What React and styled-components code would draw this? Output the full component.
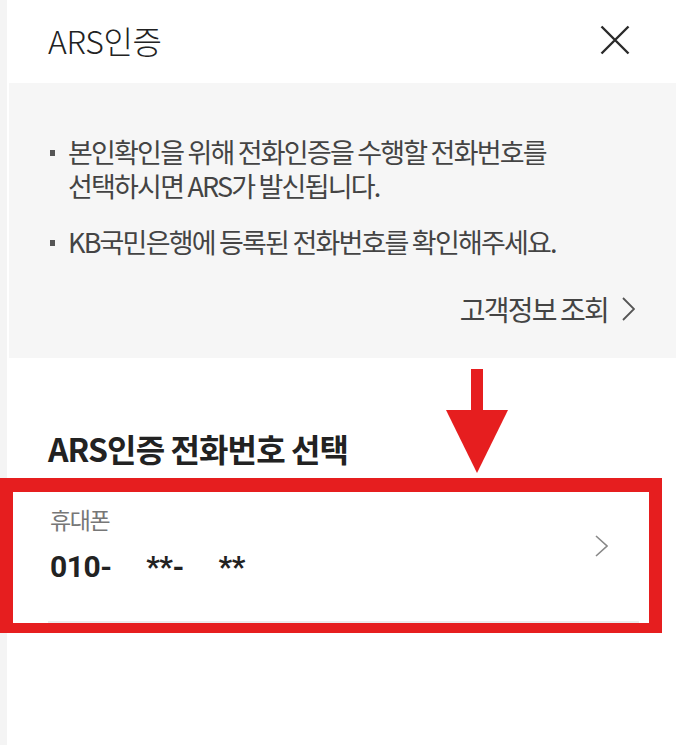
import React from "react";
import styled, { createGlobalStyle } from "styled-components";

const GlobalStyle = createGlobalStyle`
  html, body {
    margin: 0;
    padding: 0;
    background: #fff;
  }
  body {
    font-family: "Noto Sans CJK KR", "Noto Sans", sans-serif;
    color: #222;
  }
`;

const Page = styled.div`
  width: 676px;
  min-height: 745px;
  background: linear-gradient(to right, #f4f4f4 7px, #fff 7px);
`;

const Header = styled.header`
  height: 83px;
  display: flex;
  align-items: center;
  justify-content: space-between;
  padding: 0 46px 0 48px;
`;

const Title = styled.h1`
  margin: 0;
  margin-top: -4px;
  font-size: 32px;
  font-weight: 300;
  letter-spacing: -0.3px;
  color: #222;
`;

const CloseButton = styled.button`
  border: 0;
  padding: 0;
  margin-top: -4px;
  background: none;
  width: 30px;
  height: 30px;
  display: flex;
`;

const Notice = styled.section`
  margin-left: 9px;
  height: 275px;
  box-sizing: border-box;
  background: #f6f6f6;
  padding: 52px 41px 0 41px;
`;

const List = styled.ul`
  margin: 0;
  padding: 0;
  list-style: none;
`;

const Item = styled.li`
  display: flex;
  font-size: 27px;
  line-height: 34px;
  letter-spacing: -1.8px;
  color: #444;
  margin-bottom: ${(p) => p.gap || 0}px;
`;

const Lines = styled.span`
  display: flex;
  flex-direction: column;
`;

const Marker = styled.span`
  flex: 0 0 18px;
  &::before {
    content: "";
    display: block;
    width: 5px;
    height: 6px;
    margin-top: 15px;
    background: #555;
  }
`;

const LinkRow = styled.div`
  margin-top: 33px;
  display: flex;
  justify-content: flex-end;
  align-items: center;
  gap: 14px;
  font-size: 28px;
  line-height: 34px;
  letter-spacing: -1.8px;
  color: #444;
`;

const Select = styled.section`
  position: relative;
  padding: 70px 0 10px 48px;
`;

const Heading = styled.h2`
  margin: 0;
  font-size: 32px;
  line-height: 40px;
  font-weight: 700;
  letter-spacing: -0.9px;
  color: #222;
`;

const ArrowMark = styled.svg`
  position: absolute;
  left: 446px;
  top: 11px;
`;

const Highlight = styled.div`
  margin-right: 14px;
  border: 13px solid #e61e1f;
  border-top-width: 14px;
  border-bottom-width: 10px;
`;

const PhoneRow = styled.div`
  margin: 0 10px 0 35px;
  padding: 13px 31px 35px 2px;
  display: flex;
  align-items: center;
  justify-content: space-between;
  border-bottom: 2px solid #ececec;
`;

const Label = styled.div`
  font-size: 23px;
  line-height: 28px;
  letter-spacing: -1.4px;
  color: #777;
`;

const Number = styled.div`
  margin-top: 15px;
  font-family: "Roboto", "Noto Sans CJK KR", sans-serif;
  font-size: 30px;
  line-height: 38px;
  font-weight: 700;
  letter-spacing: -0.5px;
  color: #222;
  white-space: pre;
`;

const Chevron = ({ w = 13, h = 22, color = "#888", sw = 1.6 }) => (
  <svg width={w} height={h} viewBox={`0 0 ${w} ${h}`}>
    <polyline
      points={`1,1 ${w - 1},${h / 2} 1,${h - 1}`}
      fill="none"
      stroke={color}
      strokeWidth={sw}
    />
  </svg>
);

export default function App() {
  return (
    <Page>
      <GlobalStyle />
      <Header>
        <Title>ARS인증</Title>
        <CloseButton aria-label="닫기">
          <svg width="30" height="30" viewBox="0 0 30 30">
            <path d="M1.5 1.5 L28.5 28.5 M28.5 1.5 L1.5 28.5" stroke="#2a2a2a" strokeWidth="2.4" />
          </svg>
        </CloseButton>
      </Header>

      <Notice>
        <List>
          <Item gap={22}>
            <Marker />
            <Lines>
              <span>본인확인을 위해 전화인증을 수행할 전화번호를</span>
              <span>선택하시면 ARS가 발신됩니다.</span>
            </Lines>
          </Item>
          <Item>
            <Marker />
            <span>KB국민은행에 등록된 전화번호를 확인해주세요.</span>
          </Item>
        </List>
        <LinkRow>
          고객정보 조회
          <Chevron w={13} h={24} color="#555" sw={1.8} />
        </LinkRow>
      </Notice>

      <Select>
        <ArrowMark width="62" height="104" viewBox="0 0 62 104">
          <rect x="25" y="0" width="12" height="42" fill="#e61e1f" />
          <polygon points="0,41 62,41 31,104" fill="#e61e1f" />
        </ArrowMark>
        <Heading>ARS인증 전화번호 선택</Heading>
      </Select>

      <Highlight>
        <PhoneRow>
          <div>
            <Label>휴대폰</Label>
            <Number>{"010-     **-     **"}</Number>
          </div>
          <Chevron />
        </PhoneRow>
      </Highlight>
    </Page>
  );
}
